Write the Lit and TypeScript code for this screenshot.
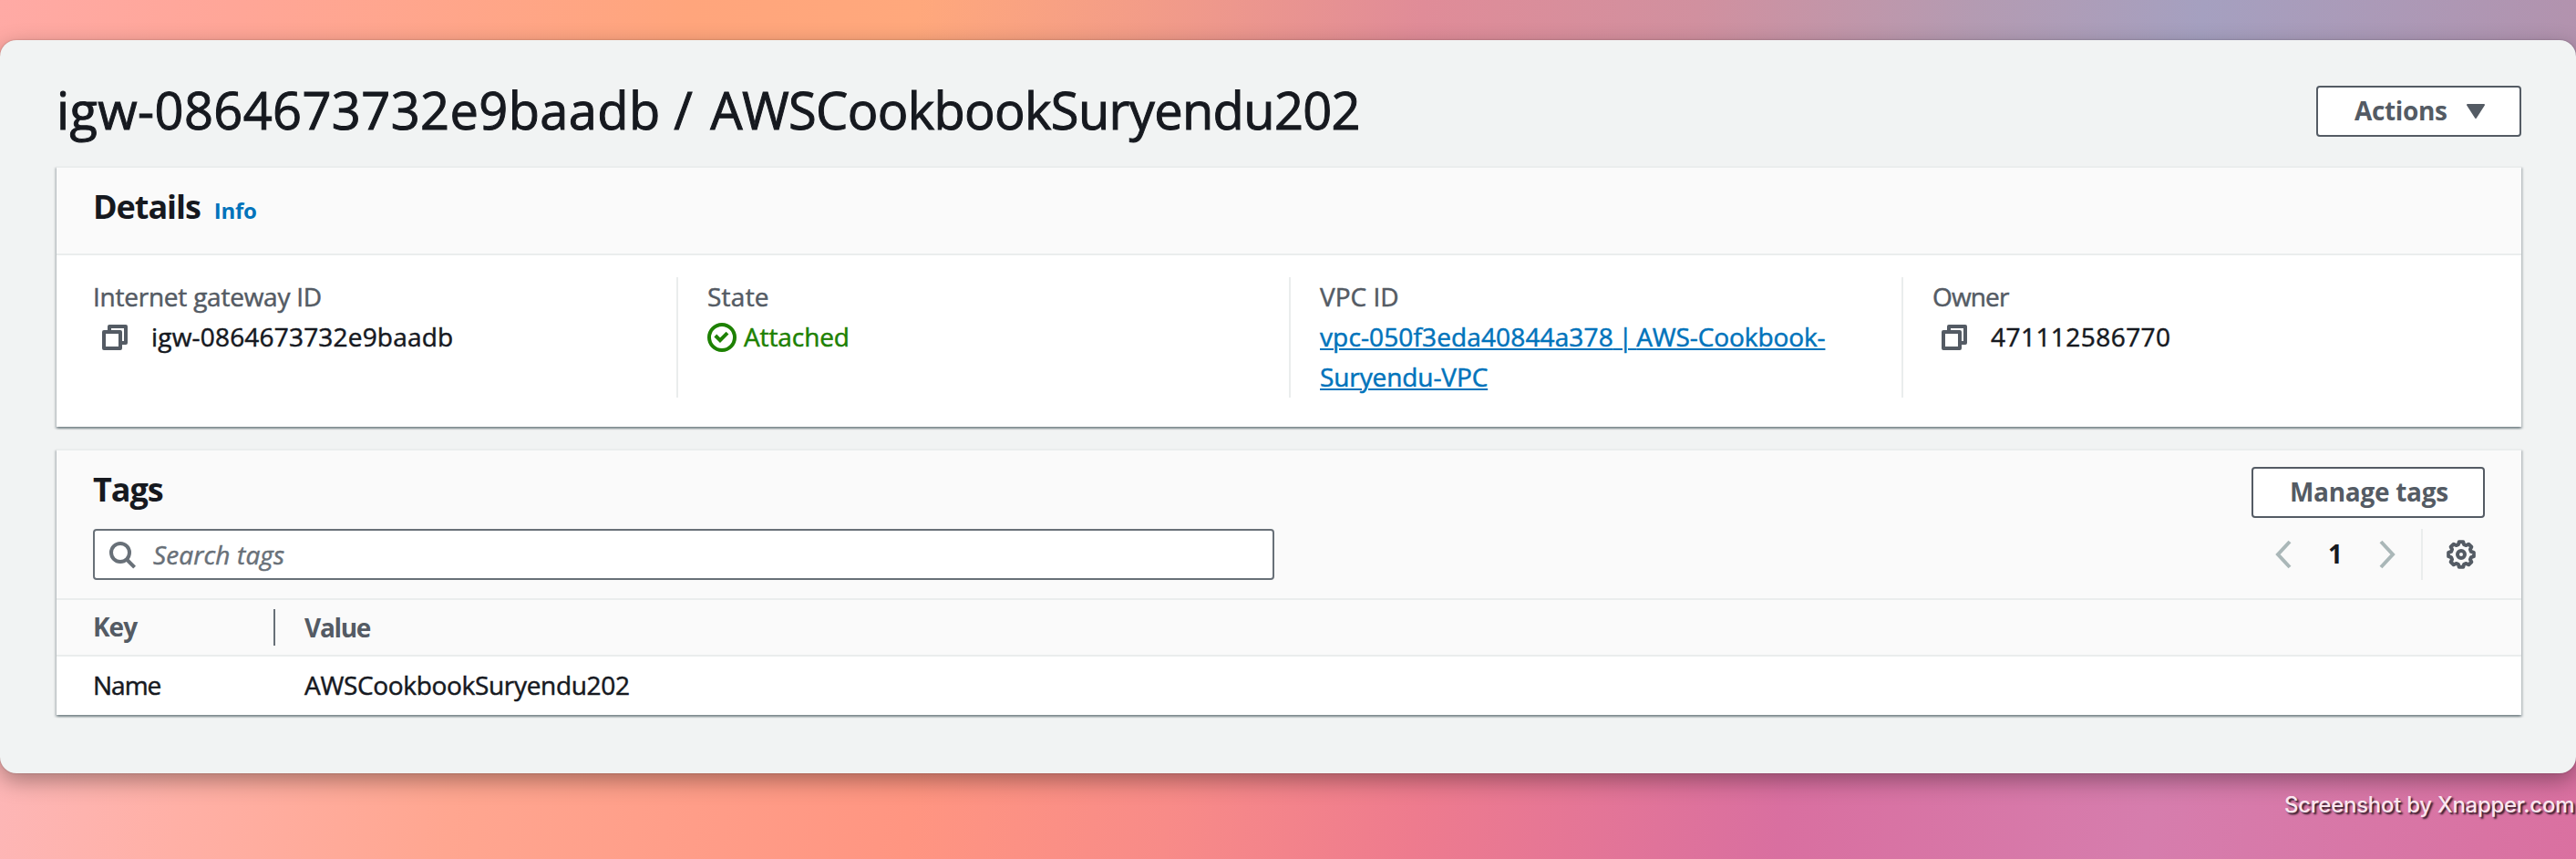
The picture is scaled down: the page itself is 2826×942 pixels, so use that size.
import { LitElement, html, svg, css } from "lit";
import { customElement } from "lit/decorators.js";

const gearPath = (() => {
  const pts: string[] = [];
  for (let i = 0; i < 8; i++) {
    const base = i * 45 - 90;
    for (const [offset, r] of [[-9, 14], [9, 14], [16, 11.4], [29, 11.4]]) {
      const a = ((base + offset) * Math.PI) / 180;
      pts.push(`${(16 + r * Math.cos(a)).toFixed(2)} ${(16 + r * Math.sin(a)).toFixed(2)}`);
    }
  }
  return `M${pts.join("L")}Z`;
})();

const icon = (w: number, h: number, body: unknown) => html`
  <svg width=${w} height=${h} viewBox="0 0 ${w} ${h}" fill="none" stroke="currentColor" stroke-width="4">${body}</svg>`;

const copyIcon = icon(32, 32, svg`
  <path stroke-linejoin="round" d="M4 10H22V28H4Z"/>
  <path stroke-linejoin="round" d="M10 8V4H28V22H24"/>`);
const checkIcon = icon(32, 32, svg`<circle cx="16" cy="16" r="14"/><path d="M8.8 14l5.2 5.2 8-8"/>`);
const searchIcon = icon(32, 32, svg`<circle cx="14" cy="14" r="10"/><path d="M21 21.5l8.6 8.6"/>`);
const prevIcon = icon(20, 32, svg`<path d="M17 2L4 16L17 30"/>`);
const nextIcon = icon(20, 32, svg`<path d="M3 2L16 16L3 30"/>`);
const gearIcon = icon(32, 32, svg`<path stroke-linejoin="round" d=${gearPath}/><circle cx="16" cy="16" r="4"/>`);
const caretIcon = html`
  <svg width="20" height="16" viewBox="0 0 20 16" fill="currentColor" stroke="currentColor" stroke-width="2" stroke-linejoin="round">
    <path d="M1 1H19L10 15Z"/>
  </svg>`;

@customElement("app-root")
export class AppRoot extends LitElement {
  static styles = css`
    :host {
      display: block;
      box-sizing: border-box;
      height: 942px;
      padding-top: 44px;
      overflow: hidden;
      font: 400 28px/44px "Open Sans", "Noto Sans", sans-serif;
      color: #16191f;
      background:
        linear-gradient(97deg, #ffaaa5 0, #ffa698 250px, #ffa57c 750px, #ffa87c 1000px, #f39c88 1250px, #e08c98 1550px, #d1909f 1850px, #b49bb2 2150px, #a5a0c0 2400px, #b392ad 2826px) 0 0 / 100% 100px no-repeat,
        linear-gradient(97deg, #fdb6b6 0, #ffb0a6 200px, #ffa690 500px, #ff9581 1000px, #f88b88 1280px, #ee7b8e 1550px, #d96fa0 1950px, #d67dad 2350px, #da70a0 2826px) 0 100% / 100% 120px no-repeat,
        #f1f3f3;
    }
    * { box-sizing: border-box; }
    svg { display: block; flex: none; }
    .window {
      height: 804px;
      padding: 44px 60px 0 62px;
      border-radius: 18px;
      background: #f1f3f3;
      box-shadow: 0 0 2px rgba(0, 0, 0, 0.25), 0 8px 24px rgba(0, 0, 0, 0.34);
    }
    .regular { -webkit-text-stroke: 0.5px currentColor; }
    .page-head {
      display: flex;
      justify-content: space-between;
      height: 94px;
    }
    h1 {
      margin: 0;
      font-size: 56px;
      font-weight: 400;
      line-height: 64px;
      white-space: nowrap;
      -webkit-text-stroke: 1px currentColor;
    }
    .title-id { letter-spacing: 0.38px; }
    .title-name { margin-left: 5px; letter-spacing: -0.67px; }
    .btn {
      display: flex;
      align-items: center;
      height: 56px;
      border: 2px solid #545b64;
      border-radius: 4px;
      background: #fff;
      color: #545b64;
      font-weight: 700;
      padding: 0 0 2px 40px;
      letter-spacing: -0.37px;
      white-space: nowrap;
    }
    .actions { width: 225px; margin-top: 6px; }
    .actions svg { margin: 2px 0 0 22px; }
    .card {
      border-top: 2px solid #eaeded;
      background: #fff;
      box-shadow: 0 2px 2px rgba(0, 28, 36, 0.3), 2px 2px 2px rgba(0, 28, 36, 0.15), -2px 2px 2px rgba(0, 28, 36, 0.15);
    }
    .details { height: 286px; }
    .tags { height: 292px; margin-top: 24px; }
    .details-head {
      display: flex;
      align-items: baseline;
      height: 96px;
      padding: 21px 0 0 40px;
      border-bottom: 2px solid #eaeded;
      background: #fafafa;
    }
    h2 { margin: 0; font-size: 36px; line-height: 44px; font-weight: 700; }
    .h-details { letter-spacing: -1.05px; }
    .h-tags { letter-spacing: -1.1px; }
    .info { margin-left: 15px; font-size: 24px; font-weight: 700; color: #0073bb; letter-spacing: -0.3px; }
    .fields {
      display: grid;
      grid-template-columns: 680px 672px 672px 680px;
      height: 132px;
      margin-top: 24px;
    }
    .field { padding-left: 32px; border-left: 2px solid #eaeded; }
    .field:first-child { border-left: 0; padding-left: 40px; }
    .label { margin-top: -1px; color: #545b64; }
    .value { display: flex; align-items: center; height: 44px; }
    .copy { color: #545b64; margin: 2px 24px 0 8px; }
    .ok { color: #1d8102; }
    .ok svg { margin: 2px 8px 0 0; }
    .link {
      width: 590px;
      color: #0073bb;
      text-decoration: underline;
      text-decoration-thickness: 2px;
      text-underline-offset: 2px;
      letter-spacing: -0.1px;
    }
    .link-id { letter-spacing: 0.13px; }
    .link-bar { letter-spacing: -1.5px; }
    .tags-head {
      display: grid;
      grid-template-columns: 1fr auto;
      grid-template-rows: 68px 56px;
      height: 164px;
      padding: 18px 40px 0 40px;
      border-bottom: 2px solid #eaeded;
      background: #fafafa;
    }
    .tags-head h2 { margin-top: 3px; }
    .manage { width: 256px; letter-spacing: -0.3px; justify-self: end; }
    .search {
      display: flex;
      align-items: center;
      width: 1296px;
      height: 56px;
      padding-left: 14px;
      border: 2px solid #687078;
      border-radius: 4px;
      background: #fff;
      color: #687078;
      font-style: italic;
      letter-spacing: 0.14px;
    }
    .search svg { margin-right: 18px; }
    .pager { display: flex; justify-content: flex-end; align-items: center; height: 56px; color: #aab7b8; }
    .page { width: 94px; padding-bottom: 2px; text-align: center; font-weight: 700; color: #16191f; }
    .prefs { display: flex; align-items: center; height: 56px; margin-left: 27px; padding: 0 10px 0 26px; border-left: 2px solid #eaeded; color: #545b64; }
    .row { display: grid; grid-template-columns: 200px 1fr; align-items: center; height: 64px; padding: 0 0 2px 40px; }
    .row.head { height: 62px; padding-bottom: 0; border-bottom: 2px solid #eaeded; background: #fafafa; color: #545b64; font-weight: 700; }
    .key-head { height: 40px; line-height: 38px; border-right: 2px solid #687078; letter-spacing: -1px; }
    .cell-value { padding-left: 32px; }
    .head .cell-value { line-height: 38px; letter-spacing: -1.3px; }
    .watermark {
      width: 320px;
      margin: 20px 0 0 2506px;
      font: 500 24px/30px Inter, sans-serif;
      letter-spacing: -0.28px;
      color: #fbe6ef;
      text-shadow: 2px 2px 2px rgba(0, 0, 0, 0.8);
      white-space: nowrap;
    }
  `;

  render() {
    const ls = (v: number) => `letter-spacing:${v}px`;
    return html`
      <div class="window">
        <header class="page-head">
          <h1><span class="title-id">igw-0864673732e9baadb</span> / <span class="title-name">AWSCookbookSuryendu202</span></h1>
          <div class="btn actions">Actions ${caretIcon}</div>
        </header>
        <section class="card details">
          <div class="details-head"><h2 class="h-details">Details</h2><span class="info">Info</span></div>
          <div class="fields regular">
            <div class="field">
              <div class="label" style=${ls(-0.24)}>Internet gateway ID</div>
              <div class="value" style=${ls(0.19)}><span class="copy">${copyIcon}</span>igw-0864673732e9baadb</div>
            </div>
            <div class="field">
              <div class="label" style=${ls(0.25)}>State</div>
              <div class="value ok" style=${ls(-0.1)}>${checkIcon}Attached</div>
            </div>
            <div class="field">
              <div class="label">VPC ID</div>
              <div class="link"><span class="link-id">vpc-050f3eda40844a378</span><span class="link-bar"> | </span>AWS-Cookbook-<br>Suryendu-VPC</div>
            </div>
            <div class="field">
              <div class="label" style=${ls(-0.85)}>Owner</div>
              <div class="value" style=${ls(0.45)}><span class="copy">${copyIcon}</span>471112586770</div>
            </div>
          </div>
        </section>
        <section class="card tags">
          <div class="tags-head">
            <h2 class="h-tags">Tags</h2>
            <div class="btn manage">Manage tags</div>
            <div class="search regular">${searchIcon}Search tags</div>
            <div class="pager">${prevIcon}<span class="page">1</span>${nextIcon}<div class="prefs">${gearIcon}</div></div>
          </div>
          <div class="row head"><div class="key-head">Key</div><div class="cell-value">Value</div></div>
          <div class="row regular">
            <div style=${ls(-1)}>Name</div>
            <div class="cell-value" style=${ls(-0.32)}>AWSCookbookSuryendu202</div>
          </div>
        </section>
      </div>
      <div class="watermark">Screenshot by Xnapper.com</div>
    `;
  }
}
